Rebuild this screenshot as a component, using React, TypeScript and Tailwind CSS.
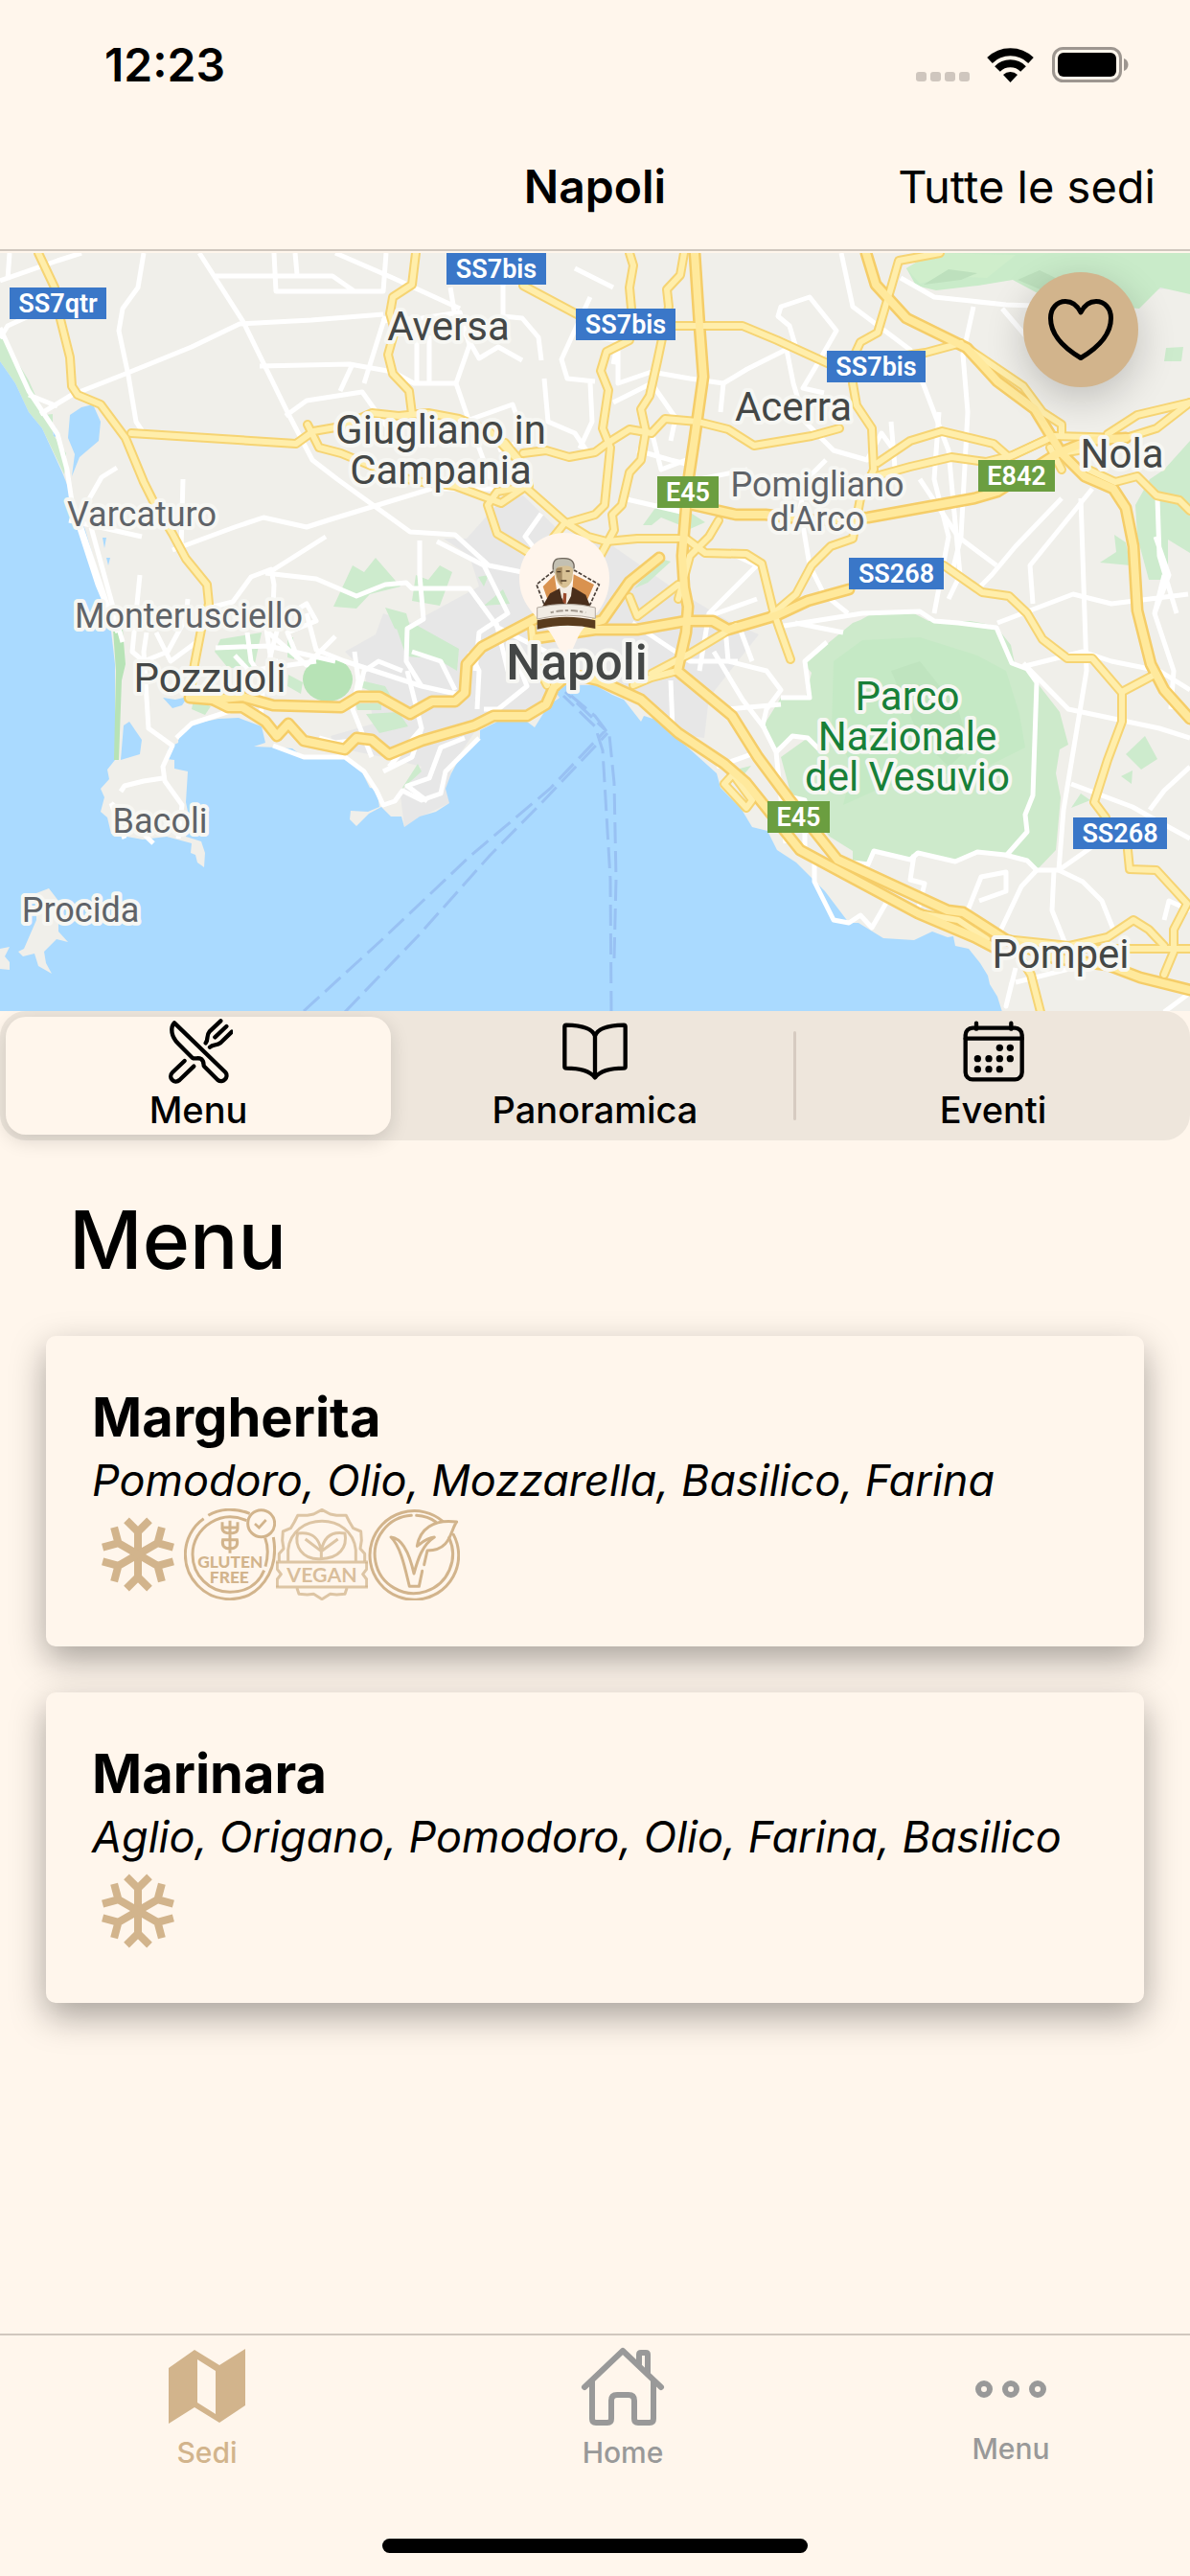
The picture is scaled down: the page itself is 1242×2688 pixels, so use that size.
import React, { useState } from 'react';

const greens = [
  'M0 348 30 397 46 433 55 432 55 453 69 473 67 495 44 447 30 430 16 400 0 377Z',
  'M368 590 380 597 392 582 418 612 386 620 372 635 348 633Z',
  'M434 600 447 605 459 590 472 597 459 632 430 627Z',
  'M230 667 273 660 265 697 238 697 224 680Z',
  'M382 745 416 743 426 758 396 765Z',
  'M412 650 436 653 479 677 477 700 455 687 424 685Z',
  'M436 797 440 805 418 825Z',
  'M300 665 306 665 307 688 300 686Z',
  'M301 704 316 712 314 724 300 716Z',
  'M372 709 402 716 410 730 374 716Z',
  'M371 734 398 734 398 741 373 741Z',
  'M202 730 220 737 214 746 200 740Z',
  'M402 634 424 640 430 660 412 656Z',
  'M505 632 525 615 532 630Z',
  'M499 602 510 600 505 612Z',
  'M671 548 684 530 716 532 736 545 720 552 690 540 680 548Z',
  'M662 614 690 583 700 586 676 608Z',
  'M1215 490 1242 460 1242 577 1219 563 1219 605 1199 605 1187 560 1185 527 1200 500Z',
  'M1163 558 1175 566 1180 590 1148 587 1165 576Z',
  'M1217 363 1235 362 1233 377 1215 377Z',
  'M1195 768 1208 792 1191 803 1175 787Z',
  'M1118 843 1128 828 1138 835Z',
  'M1170 810 1182 804 1181 818Z',
  'M768 803 784 799 775 810Z',
];

const lakes = [
  'M73 433 85 425 97 422 105 440 103 460 83 477 75 497 78 474 71 457Z',
  'M170 728 183 730 196 727 190 736 180 739Z',
  'M135 753 148 772 146 787 126 793 129 757Z',
  'M186 772 196 774 188 780Z',
  'M54 445 58 445 60 457 56 455Z',
  'M107 561 111 561 109 572Z',
  'M111 582 115 582 113 590Z',
];

const urban = [
  'M463 562 487 562 520 525 546 517 590 560 640 570 700 612 760 648 792 662 770 690 740 728 735 770 700 765 664 730 600 715 580 730 500 757 471 800 469 838 440 852 422 863 418 830 440 800 400 790 350 780 345 768 390 755 380 700 360 680 392 662 400 640 430 650 500 612 490 580Z',
  'M1192 290 1242 275 1242 300 1210 302Z',
];

// minor streets
const streets = [
  'M0 293 60 272 85 264',
  'M10 264 8 292',
  'M0 353 8 340 30 330M0 342 30 408 60 453 70 490 76 530 102 610 123 660',
  'M30 412 60 424M42 432 75 412 131 390 200 362 250 338 325 334 400 328',
  'M150 264 144 300 128 322 124 345 134 392 142 440 150 452',
  'M208 264 254 336 300 430 326 480 352 500 428 555 475 558 510 590 560 600',
  'M225 288 347 288 370 304M286 264 288 304 400 304 403 264',
  'M308 264 310 286M350 264 410 290 480 322',
  'M271 382 365 380 410 388 432 400 475 400M367 382 355 408',
  'M298 434 320 418 378 409 416 462M402 330 380 400',
  'M398 335 440 332 480 326 490 360 476 400 488 435 512 500',
  'M435 346 435 398M448 350 448 398M470 300 475 330 500 374 520 362 545 376M525 264 525 330 545 332 562 352 565 376',
  'M490 438 535 422 540 436 555 440 545 460 520 470',
  'M616 310 602 340 586 375 592 395 621 398',
  'M568 395 572 440 600 452 612 470M616 400 618 440 605 468',
  'M191 500 189 572M180 574 245 550 275 540 320 550 345 542 450 510 520 510',
  'M283 596 340 560M72 543 95 548 148 560M82 540 106 498 122 488',
  'M277 598 330 604 372 622 402 610 424 608 430 614 490 614 520 655 570 680',
  'M83 545 120 655M95 550 128 670M146 600 138 680 150 690 175 680 194 645 196 625',
  'M203 638 243 628 262 602 283 594 286 610 285 635 277 650 283 690 290 690M283 652 320 630 330 648 300 660 310 685',
  'M280 660 320 694 350 664M225 676 280 674 350 690M245 684 260 700 330 690',
  'M438 564 438 600 442 646 425 656 424 690 440 716M565 536 548 560 580 600',
  'M420 700 395 690 380 700 375 720M456 565 505 590 530 640 500 660 496 700',
  'M153 660 150 680 155 760 180 778 170 800 172 815 190 840 186 875M163 660 178 690 205 670',
  'M184 770 200 755 240 742M126 826 130 820 150 815 170 812M116 838 160 880M116 838 130 875',
  'M258 660 262 690 275 710 272 750M290 655 278 700M320 640 330 678 360 690 440 716 480 725',
  'M370 680 374 710 368 740 388 790M333 770 350 775 375 772',
  'M285 778 317 790 360 790 380 805 393 825 400 840 412 836 420 825 440 835 460 828 465 805 500 770',
  'M400 805 430 790 440 760 406 800M425 700 440 760M430 680 460 690 475 720M540 690 550 716 520 740 505 740',
  'M490 680 500 700 498 740M446 836 425 820 448 812 460 780 485 770M518 650 530 700 560 690',
  'M621 352 645 355 645 400 680 388 720 395 755 400 780 385 830 360 824 340 812 330 815 320 845 310 873 345 850 385 838 405 860 410M645 355 640 380',
  'M820 360 828 400 840 440 870 470 905 480 920 452 933 470M640 300 600 280M755 400 752 430',
  'M640 420 680 400 705 436 700 460M665 470 700 480 720 485M680 450 690 490 716 480M650 520 715 535 730 500 780 490',
  'M878 264 890 320 950 365 990 470 1002 600 990 625',
  'M940 290 975 310 1050 318 1108 320M1016 320 1005 370 1010 430 1003 560 993 600',
  'M1046 322 1070 350 1100 345M980 430 975 500 990 560 975 640',
  'M1108 520 1060 570 1035 600 1020 615M1140 510 1075 590 1078 630',
  'M1128 520 1134 700 1110 845 1105 908M960 500 1000 560 1040 590',
  'M862 480 842 500 835 530 845 590 860 620 885 640M930 440 935 500',
  'M1041 650 1120 620 1160 630 1240 620M1215 600 1205 640 1225 700 1222 740',
  'M758 575 790 590 760 620 740 640 730 700M720 650 790 625M830 650 880 660',
  'M812 654 900 640 960 638 975 648 1000 650 1040 655 1056 692 1072 698 1082 712 1078 830 1070 850 1072 868 1050 893',
  'M1206 560 1220 600 1205 640M1208 520 1210 580 1228 640',
  'M757 655 760 690 800 700 815 720 800 740 796 757 810 785 820 880M660 650 720 690 770 690M707 700 760 740 815 735',
  'M700 710 702 760 733 785M745 680 775 730 798 760M770 650 785 690M748 800 790 785',
  'M863 670 840 690 845 728 815 728',
  'M810 785 827 768 843 770 855 782M818 830 840 835 840 890M850 900 850 920 870 960 886 963 898 955 910 968 925 942',
  'M890 900 906 902 912 888 950 897 958 890 997 899 1020 889 1049 892 1072 898 1082 908 1105 908 1145 880',
  'M954 892 950 918 965 922 958 950M1082 908 1066 925 1040 980M1100 908 1098 950 1112 985M1105 908 1130 920 1150 940 1162 970',
  'M1010 950 1024 915 1050 910 1050 930 1022 940M1068 692 1115 740 1210 760 1242 770',
  'M1070 695 1130 680 1160 690 1210 700 1242 720M1118 818 1150 830 1182 842 1205 855 1242 875',
  'M1200 845 1215 825 1242 800M1056 1025 1050 1050 1060 1010M1060 1025 1120 1010 1156 1007M1242 950 1220 940 1215 960M1215 1056 1242 1036',
];

// main roads, drawn as a dark casing and a lighter core
const roads = [
  'M40 264 57 300 63 333 73 373 75 403 81 412 105 422 131 457 150 503 162 527 180 557 194 583 216 610 218 630 210 657 203 693 198 728',
  'M137 452 309 463 327 450 356 445 388 431 416 434 447 431 479 437 511 450 530 470 546 485',
  'M434 264 430 297 410 310 407 327 412 345 405 370 410 390 427 408 430 432',
  'M321 443 333 467 356 473 392 488 432 502 475 507 523 525 548 508 590 545 578 560 570 577',
  'M546 508 519 513 509 527 519 557 554 578 570 578',
  'M527 462 546 485 552 507',
  'M546 473 570 470 594 477 621 472 633 463 657 448 680 452 694 437 728 440 760 448 787 465 847 455 876 447',
  'M546 298 606 330 640 340 705 340 775 340 811 355 870 382 966 368 1003 358',
  'M714 264 710 287 696 302 698 320 686 377 678 413 669 427 674 450 669 480 657 493 649 527 639 537 641 553 621 590',
  'M657 264 661 277 657 300 659 322 657 355 633 367 627 387 635 407 629 447 637 467 631 527 621 537 594 545',
  'M1009 363 1068 403 1088 430 1108 443 1108 453',
  'M981 264 938 272 930 300 916 347 898 357 892 370 890 400 894 423 910 447 912 490 898 520 890 562 867 570 847 590 831 620 805 642',
  'M916 483 950 460 983 450 1037 463 1053 477 1100 455',
  'M914 497 950 487 993 477 1029 482 1057 475 1100 455 1175 457 1207 447 1242 420',
  'M1156 453 1187 433 1242 420',
  'M590 545 614 560 633 565 665 562 716 562 736 577 779 578 795 588 807 637 815 660 825 688',
  'M750 543 740 560 720 580 708 625',
  'M657 623 665 643 708 610',
  'M985 590 1025 618 1053 622 1072 640 1088 667 1114 687 1140 687 1171 723 1171 753 1156 793 1142 837 1154 853',
  'M1177 887 1179 907 1207 908 1239 943 1225 970 1225 993 1215 1017',
  'M1171 722 1203 705',
  'M1136 490 1164 503 1187 497 1207 517 1231 522 1242 533',
  'M1096 467 1108 490M1108 473 1136 468',
  'M680 703 720 682 768 653',
  'M661 715 680 707 707 700',
  'M958 953 1000 960 1030 980',
  'M756 818 765 808 785 835 779 843 756 818',
  'M1057 987 1076 1017 1086 1056',
  'M1049 980 1116 987 1156 978 1183 960 1199 970 1215 987',
  'M1130 990 1242 990',
  'M555 655 558 690 571 715',
];

const motorways = [
  'M725 264 730 340 734 393 725 457 719 497 716 530 712 580 714 613 718 633 716 660 707 700 764 747 791 790 823 833 874 897 989 950 1005 952 1049 980 1100 1000 1156 1007 1190 1020 1242 1033',
  'M904 264 914 297 946 332 1009 363 1041 398 1080 427 1108 473 1132 497 1162 510 1175 530 1183 570 1187 637 1201 693 1215 720 1242 750',
  'M724 527 768 537 799 537 850 543 906 540 1017 520 1041 513 1104 473 1136 460 1175 457',
  'M688 582 657 607 629 647 600 655',
  'M560 666 621 657 665 657 716 648 744 648 760 657 811 642 843 627 886 615',
  'M198 728 222 730 253 727 285 736 356 738 374 727 396 727 428 745 451 732 475 732 485 723 487 693 503 675 560 645',
  'M218 728 238 738 253 738 277 753 289 768 301 755 317 773 360 782 372 770 388 772 406 787 440 773 495 757 515 747 550 747 570 735 578 717 594 703 625 710 669 730 708 765 756 797 779 817 819 867 835 887 958 953 1017 978 1040 990',
];

type Place = { lines: [string, number][]; x: number; kind: 'town' | 'village' | 'park' };

const places: Place[] = [
  { lines: [['Aversa', 355]], x: 468, kind: 'town' },
  { lines: [['Giugliano in', 463], ['Campania', 505]], x: 460, kind: 'town' },
  { lines: [['Acerra', 439]], x: 828, kind: 'town' },
  { lines: [['Nola', 488]], x: 1171, kind: 'town' },
  { lines: [['Pozzuoli', 722]], x: 219, kind: 'town' },
  { lines: [['Pompei', 1010]], x: 1107, kind: 'town' },
  { lines: [['Varcaturo', 549]], x: 148, kind: 'village' },
  { lines: [['Monterusciello', 655]], x: 197, kind: 'village' },
  { lines: [['Pomigliano', 518], ["d'Arco", 554]], x: 853, kind: 'village' },
  { lines: [['Bacoli', 869]], x: 167, kind: 'village' },
  { lines: [['Procida', 962]], x: 84, kind: 'village' },
  { lines: [['Parco', 741], ['Nazionale', 783], ['del Vesuvio', 825]], x: 947, kind: 'park' },
];

const placeStyles = {
  town: 'fill-[#444746] text-[42px]',
  village: 'fill-[#5f6368] text-[36px]',
  park: 'fill-[#188038] text-[42px]',
};

const shields = [
  { label: 'SS7qtr', x: 10, y: 300, w: 101, color: '#3a77c8' },
  { label: 'SS7bis', x: 466, y: 264, w: 104, color: '#3a77c8' },
  { label: 'SS7bis', x: 601, y: 322, w: 104, color: '#3a77c8' },
  { label: 'SS7bis', x: 863, y: 366, w: 103, color: '#3a77c8' },
  { label: 'E45', x: 686, y: 497, w: 64, color: '#6b9e40' },
  { label: 'E842', x: 1021, y: 480, w: 80, color: '#6b9e40' },
  { label: 'SS268', x: 886, y: 582, w: 99, color: '#3a77c8' },
  { label: 'E45', x: 801, y: 836, w: 65, color: '#6b9e40' },
  { label: 'SS268', x: 1120, y: 853, w: 98, color: '#3a77c8' },
];

function NapoliMap() {
  return (
    <svg viewBox="0 264 1242 791" className="block w-full font-['Roboto',sans-serif]" role="img" aria-label="Mappa di Napoli">
      <rect y="264" width="1242" height="792" fill="#f0efea" />
      {urban.map((d) => <path key={d} d={d} fill="#e7e7e7" />)}
      {greens.map((d) => <path key={d} d={d} fill="#cdebcd" />)}

      {/* Vesuvio park */}
      <path d="M914 638 898 647 890 650 862 673 839 693 847 702 841 728 815 728 797 757 807 783 827 768 843 770 815 790 825 827 866 873 890 888 890 900 906 902 912 888 950 897 954 892 997 899 1017 889 1049 892 1072 898 1082 908 1102 887 1107 832 1102 807 1106 782 1115 777 1106 743 1082 712 1070 695 1059 692 1055 673 1039 653 1013 648 969 648 950 638Z" fill="#cdeacb" />
      <path d="M870 690 900 668 960 665 1020 684 1050 700 1064 745 1070 780 1030 800 960 812 920 822 880 840 890 800 868 760Z" fill="#c5e9c5" />
      <path d="M930 700 960 690 1000 740 1012 780 990 800 960 770Z" fill="#bfe4bf" />

      {/* hills above Nola */}
      <path d="M973 264 946 280 956 298 977 303 1021 298 1057 292 1096 313 1189 322 1211 300 1242 307 1242 264Z" fill="#c9ebc9" />
      <path d="M973 264 1060 266 1030 290 990 288 960 296 946 280Z" fill="#cfeecb" />
      <path d="M964 297 990 281 1020 285 1003 292Z" fill="#bde0bd" />
      <path d="M1062 292 1085 282 1110 294 1095 306Z" fill="#bde0bd" />

      {/* sea and islands */}
      <path d="M0 377 16 400 30 430 44 447 65 493 77 523 89 553 99 587 113 633 117 667 120 693 120 793 112 803 114 813 105 823 109 832 105 847 112 853 116 870 149 876 174 873 200 880 199 890 204 892 206 900 213 905 214 890 210 878 194 873 198 857 194 837 196 805 182 802 182 793 174 792 176 780 186 775 188 765 204 755 228 750 249 749 273 758 277 775 265 779 289 780 305 781 317 790 348 788 360 792 376 802 386 822 393 823 396 842 384 847 366 846 365 855 372 862 385 849 398 842 408 852 419 852 422 863 438 852 455 847 469 838 465 823 471 807 483 785 501 770 501 762 519 753 550 753 558 759 568 743 574 735 584 728 580 722 590 715 621 715 639 725 651 730 669 753 672 747 688 752 706 770 718 780 748 807 752 822 773 843 785 863 801 867 811 887 831 900 861 930 886 963 896 963 922 979 954 981 973 972 989 978 995 977 997 987 1011 990 1023 1005 1031 1018 1033 1027 1041 1040 1046 1056 0 1056Z" fill="#aadaff" />
      <path d="M38 932 51 927 61 940 61 972 71 983 59 980 46 993 48 1005 54 1016 40 1008 36 995 24 998 19 993 25 990 38 960Z" fill="#f0efea" />
      <path d="M0 990 10 988 5 998 10 1004 10 1012 0 1011Z" fill="#f0efea" />
      {lakes.map((d) => <path key={d} d={d} fill="#aadaff" />)}
      <path d="M118 657 128 657 131 693 127 710 124 793 119 793 121 700Z" fill="#b7e3b6" />
      <ellipse cx="342" cy="709" rx="26" ry="23" fill="#b7e3b6" />

      {/* ferry lines */}
      <g fill="none" stroke="#98c1f3" strokeWidth="3" strokeDasharray="22 8">
        <path d="M317 1055 396 983 491 893 574 823 632 762 590 722" />
        <path d="M360 1056 436 977 511 893 566 837 634 765" />
        <path d="M638 1056 637 917 629 783 621 758 588 726" />
        <path d="M641 1000 643 917 641 817 636 767 621 747 596 726" />
      </g>

      <g fill="none" stroke="#ffffff" strokeWidth="5" strokeLinejoin="round">
        {streets.map((d) => <path key={d} d={d} />)}
      </g>
      <g fill="none" strokeLinejoin="round" strokeLinecap="round">
        <g stroke="#f6d473" strokeWidth="10">{roads.map((d) => <path key={d} d={d} />)}</g>
        <g stroke="#f5cd68" strokeWidth="13">{motorways.map((d) => <path key={d} d={d} />)}</g>
        <g stroke="#ffeeab" strokeWidth="6">{roads.map((d) => <path key={d} d={d} />)}</g>
        <g stroke="#ffe99c" strokeWidth="8">{motorways.map((d) => <path key={d} d={d} />)}</g>
      </g>

      {places.map((place) => (
        <text key={place.x} textAnchor="middle" stroke="#f7f7f3" strokeWidth="8" strokeLinejoin="round" paintOrder="stroke" className={placeStyles[place.kind]}>
          {place.lines.map(([line, y]) => <tspan key={line} x={place.x} y={y}>{line}</tspan>)}
        </text>
      ))}

      {shields.map((s) => (
        <g key={`${s.label}-${s.x}`}>
          <rect x={s.x} y={s.y} width={s.w} height="33" fill={s.color} />
          <text x={s.x + s.w / 2} y={s.y + 26} textAnchor="middle" className="fill-white text-[27px] font-semibold">{s.label}</text>
        </g>
      ))}

      <path d="M589 556a47 47 0 0 1 47 47c0 26-14 38-28 54-8 10-10 27-17 27s-10-17-20-28c-14-16-29-27-29-53a47 47 0 0 1 47-47Z" fill="#fff5ec" />
      <text x="602" y="709" textAnchor="middle" stroke="#f7f7f3" strokeWidth="8" strokeLinejoin="round" paintOrder="stroke" className="fill-[#444746] text-[51px] font-medium">Napoli</text>
      <PinPortrait />
    </svg>
  );
}

function PinPortrait() {
  return (
    <g transform="translate(500 560) scale(0.3333)">
      <path d="M232 108 180 150 204 212 348 212 376 150 300 106Z" fill="#fff5ec" stroke="#4b4039" strokeWidth="5" strokeDasharray="12 5" />
      <path d="M236 120 200 156 214 196 245 180ZM296 118 360 150 338 200 292 170Z" fill="#d9924f" />
      <path d="M196 222 222 178 256 160 294 158 334 182 350 222Z" fill="#4a2e1b" />
      <path d="M252 160 292 152 288 186 272 216 258 190Z" fill="#f3ece2" />
      <path d="M264 176 274 178 272 214 262 204Z" fill="#9a4a2c" />
      <path d="M236 92C238 72 296 68 296 96L292 132C288 152 270 166 260 158 246 150 236 130 236 92Z" fill="#d8c194" />
      <path d="M240 98 260 96 260 150C248 144 240 126 240 98Z" fill="#a58b62" />
      <path d="M233 112C226 62 250 66 266 66 290 66 300 78 296 108 290 88 276 92 262 92 246 92 240 96 238 116Z" fill="#c3c0b2" />
      <path d="M232 104C228 64 250 68 266 68 290 68 300 80 297 100" fill="none" stroke="#6f675d" strokeWidth="4" />
      <path d="M244 110h12M272 108h12M256 138h18" stroke="#4c3a26" strokeWidth="4" />
      <path d="M182 222Q275 200 364 222L364 256Q275 236 182 258Z" fill="#f1ebe3" stroke="#b3a99e" strokeWidth="3" />
      <path d="M224 238Q275 224 334 238" fill="none" stroke="#a39a90" strokeWidth="6" strokeDasharray="10 8 22 6" />
      <path d="M182 262Q275 240 364 262L364 288Q275 268 182 290Z" fill="#5a3c1d" />
    </g>
  );
}

function StatusIcons() {
  return (
    <svg width="222" height="40" viewBox="0 0 222 40" aria-hidden="true">
      <g fill="#cfc6be">
        <rect x="0" y="27" width="11" height="10" rx="3" />
        <rect x="15" y="27" width="11" height="10" rx="3" />
        <rect x="30" y="27" width="11" height="10" rx="3" />
        <rect x="45" y="27" width="11" height="10" rx="3" />
      </g>
      <g fill="none" stroke="#000" strokeWidth="8">
        <path d="M77 15a31 31 0 0 1 43 0" />
        <path d="M85 24a19 19 0 0 1 27 0" />
      </g>
      <path d="M98.500 38 91 30a11 11 0 0 1 15 0Z" />
      <rect x="143.500" y="2.500" width="70" height="34" rx="10" fill="none" stroke="#9d9690" strokeWidth="3" />
      <rect x="148" y="7" width="61" height="25" rx="6" />
      <path d="M217 13c6 2 6 11 0 13Z" fill="#9d9690" />
    </svg>
  );
}

function CutleryIcon() {
  return (
    <svg viewBox="33 36 216 216" className="size-18" fill="none" stroke="currentColor" strokeWidth="13" strokeLinecap="round" strokeLinejoin="round" aria-hidden="true">
      <path d="M66 55 226 210C238 224 218 246 202 234L160 192C154 186 162 178 150 168 140 162 130 170 122 164L78 120C56 98 52 70 66 55Z" />
      <path d="M98 174 60 210C44 226 66 248 82 234L127 191" />
      <path d="M211 49 176 82C164 96 174 106 164 118M229 66 193 100M246 83 211 117C198 128 188 120 177 131" />
    </svg>
  );
}

function BookIcon() {
  return (
    <svg viewBox="1284 36 216 216" className="size-18" fill="none" stroke="currentColor" strokeWidth="13" strokeLinejoin="round" aria-hidden="true">
      <path d="M1392 96C1384 72 1350 63 1302 62Q1297 62 1297 67V192Q1297 197 1302 197C1342 197 1376 206 1392 226 1408 206 1442 197 1482 197Q1487 197 1487 192V67Q1487 62 1482 62C1434 63 1400 72 1392 96ZM1392 90V226" />
    </svg>
  );
}

function CalendarIcon() {
  const days = [[127, 97], [160, 97], [58, 131], [93, 131], [127, 131], [160, 131], [58, 164], [93, 164], [127, 164]];
  return (
    <svg viewBox="0 0 216 216" className="size-18" fill="none" stroke="currentColor" strokeWidth="13" strokeLinecap="round" aria-hidden="true">
      <rect x="20" y="35" width="177" height="161" rx="22" />
      <path d="M20 68H197M54 20V38M163 20V38" />
      {days.map(([x, y]) => <circle key={`${x}-${y}`} cx={x} cy={y} r="11" fill="currentColor" stroke="none" />)}
    </svg>
  );
}

function SnowflakeIcon() {
  return (
    <svg viewBox="0 0 288 288" className="size-24" role="img" aria-label="Surgelato" fill="none" stroke="currentColor" strokeWidth="24">
      {[0, 60, 120, 180, 240, 300].map((angle) => (
        <path key={angle} transform={`rotate(${angle} 144 144)`} d="M144 144V60M108 37 144 73 180 37" />
      ))}
    </svg>
  );
}

function GlutenFreeIcon() {
  return (
    <svg viewBox="0 0 288 288" className="size-24" role="img" aria-label="Senza glutine" fill="none" stroke="currentColor" strokeWidth="9">
      <path d="M76 22C112 0 160 -2 206 16M280 90C300 200 232 284 144 284 60 284 4 216 4 144 4 100 26 56 62 32" />
      <path d="M84 44C120 22 160 22 196 38M254 92C266 124 264 150 255 182M251 194C232 240 192 262 144 262 80 262 27 210 27 144 27 104 48 66 84 44" />
      <circle cx="242" cy="47" r="42" />
      <path d="m222 48 13 12 22-24" strokeWidth="8" />
      <path d="M144 38V140M120 43V64Q122 78 144 78 168 78 168 64V43M120 60H168M122 98H166Q172 126 144 126 116 126 122 98Z" />
      <g fill="currentColor" stroke="none" textAnchor="middle" className="font-['Lato',sans-serif] text-[52px] font-black">
        <text x="145" y="185">GLUTEN</text>
        <text x="142" y="233">FREE</text>
      </g>
    </svg>
  );
}

function VeganIcon() {
  return (
    <svg viewBox="0 0 288 288" className="size-24" role="img" aria-label="Vegano" fill="none" stroke="currentColor" strokeOpacity="0.75" strokeWidth="9" strokeLinejoin="round">
      <path d="M10 166V142L24 126 20 100 22 72 46 62 58 42 68 22 98 22 118 18 144 4 170 18 190 22 220 22 230 42 242 62 266 72 268 100 264 126 278 142V166" />
      <path d="M38 166V130C50 10 238 10 250 130V166M0 168H288M0 246H288M66 250 72 268 98 270 118 268 144 284 170 268 190 270 216 268 222 250" />
      <path d="M4 168V190L16 206 4 222V246M284 168V190L272 206 284 222V246" />
      <path d="M138 158C80 160 58 116 68 78 112 72 134 90 142 132 150 90 172 70 216 78 224 120 200 158 138 158M92 96 142 134V158M142 134 194 96" />
      <text x="144" y="230" textAnchor="middle" stroke="none" fill="currentColor" fillOpacity="0.85" className="font-['Lato',sans-serif] text-[64px] font-bold">VEGAN</text>
    </svg>
  );
}

function VegetarianIcon() {
  return (
    <svg viewBox="0 0 288 288" className="size-24" role="img" aria-label="Vegetariano" fill="none" stroke="currentColor" strokeWidth="9" strokeLinecap="round" strokeLinejoin="round">
      <path d="M234 40A139 139 0 1 0 268 82" />
      <path d="M136 22A122 122 0 1 0 254 92M152 22C178 24 196 30 212 42" />
      <path d="M170 196 160 244H130C118 196 104 120 72 90 112 94 132 150 144 204 156 160 170 114 208 90 184 92 170 106 154 118 162 66 204 32 278 42 258 66 262 132 186 132L176 176" />
    </svg>
  );
}

const diets = {
  frozen: SnowflakeIcon,
  glutenFree: GlutenFreeIcon,
  vegan: VeganIcon,
  vegetarian: VegetarianIcon,
};

type Dish = { name: string; ingredients: string; tags: (keyof typeof diets)[] };

const dishes: Dish[] = [
  { name: 'Margherita', ingredients: 'Pomodoro, Olio, Mozzarella, Basilico, Farina', tags: ['frozen', 'glutenFree', 'vegan', 'vegetarian'] },
  { name: 'Marinara', ingredients: 'Aglio, Origano, Pomodoro, Olio, Farina, Basilico', tags: ['frozen'] },
];

const tabs = [
  { id: 'menu', label: 'Menu', Icon: CutleryIcon },
  { id: 'panoramica', label: 'Panoramica', Icon: BookIcon },
  { id: 'eventi', label: 'Eventi', Icon: CalendarIcon },
];

function BottomNav() {
  return (
    <nav className="grid h-[253px] grid-cols-[432fr_436fr_374fr] items-start border-t-2 border-[#d0c7be] pt-3 text-[30px] leading-9 font-medium text-[#999999]">
      <a href="#sedi" className="flex flex-col items-center gap-2 text-[#d2b48c]">
        <svg viewBox="0 0 84 84" className="size-21" fill="currentColor" aria-hidden="true">
          <path fillRule="evenodd" d="M2 22 29 3 55 19 82 2V61L55 79 29 63 2 80ZM32 13V58L51 70V25Z" />
        </svg>
        Sedi
      </a>
      <a href="#home" className="flex flex-col items-center gap-2">
        <svg viewBox="0 0 88 84" className="h-21 w-22" fill="none" stroke="currentColor" strokeWidth="6" strokeLinecap="round" strokeLinejoin="round" aria-hidden="true">
          <path d="M4 42 44 4 84 42M12 36V75Q12 79 16 79H28Q32 79 32 75V56Q32 50 38 50H50Q56 50 56 56V75Q56 79 60 79H72Q76 79 76 75V36M61 18V8Q61 6 63 6H68Q70 6 70 8V27" />
        </svg>
        Home
      </a>
      <a href="#altro" className="flex flex-col items-center gap-1">
        <svg viewBox="0 0 84 84" className="size-21" fill="none" stroke="currentColor" strokeWidth="6" aria-hidden="true">
          <circle cx="14" cy="44" r="6" />
          <circle cx="42" cy="44" r="6" />
          <circle cx="70" cy="44" r="6" />
        </svg>
        Menu
      </a>
    </nav>
  );
}

export default function App() {
  const [tab, setTab] = useState('menu');
  const [liked, setLiked] = useState(false);

  return (
    <div className="flex min-h-screen flex-col bg-[#fff6ec] font-['Inter','Liberation_Sans',sans-serif] text-black">
      <div className="flex h-[130px] items-center justify-between pt-1.5 pr-16 pl-[109px]">
        <span className="text-[48px] font-semibold">12:23</span>
        <StatusIcons />
      </div>

      <header className="mb-0.5 grid h-[132px] grid-cols-3 items-center border-b-2 border-[#d0c7be] px-9 text-[47px]">
        <span />
        <h1 className="text-center text-[48px] font-semibold">Napoli</h1>
        <a href="#tutte" className="justify-self-end whitespace-nowrap">Tutte le sedi</a>
      </header>

      <div className="relative">
        <NapoliMap />
        <button
          type="button"
          aria-label="Preferito"
          aria-pressed={liked}
          onClick={() => setLiked((v) => !v)}
          className="absolute top-5 right-[54px] flex size-[120px] items-center justify-center rounded-full bg-[#d2b48c] shadow-[0_12px_40px_rgba(0,0,0,0.2)]"
        >
          <svg viewBox="0 0 68 64" className="h-16 w-17" fill={liked ? 'currentColor' : 'none'} stroke="currentColor" strokeWidth="5" strokeLinejoin="round" aria-hidden="true">
            <path d="M34 14C30 6 24 2.500 18 2.500 9 2.500 2.500 10 2.500 20 2.500 38 18 52 34 61.500 50 52 65.500 38 65.500 20 65.500 10 59 2.500 50 2.500 44 2.500 38 6 34 14Z" />
          </svg>
        </button>
      </div>

      <div role="tablist" className="grid grid-cols-3 rounded-[27px] bg-[#eee6dc] py-1.5">
        {tabs.map(({ id, label, Icon }) => (
          <div key={id} className="group flex items-center">
            <span className="hidden h-[93px] w-[3px] rounded-full bg-[#d6cbc1] group-last:block" />
            <button
              type="button"
              role="tab"
              aria-selected={tab === id}
              onClick={() => setTab(id)}
              className={`mx-1.5 flex grow flex-col items-center rounded-[21px] text-[38px] leading-[51px] font-medium ${tab === id ? 'bg-[#fff6ec] shadow-[0_6px_20px_rgba(0,0,0,0.14)]' : ''}`}
            >
              <Icon />
              {label}
            </button>
          </div>
        ))}
      </div>

      <main className="flex grow flex-col px-12">
        <h2 className="px-6 pt-12 pb-11 text-[84px] leading-28 font-medium">Menu</h2>
        <div className="flex flex-col gap-12">
          {dishes.map((dish) => (
            <article key={dish.name} className="rounded-[10px] bg-[#fff6ec] p-12 shadow-[0_14px_36px_rgba(0,0,0,0.34)]">
              <h3 className="text-[56px] leading-[74px] font-bold">{dish.name}</h3>
              <p className="text-[45px] leading-[58px] italic">{dish.ingredients}</p>
              <div className="flex text-[#d2b48c]">
                {dish.tags.map((tag) => {
                  const Icon = diets[tag];
                  return <Icon key={tag} />;
                })}
              </div>
            </article>
          ))}
        </div>
      </main>

      <BottomNav />
      {/* home indicator */}
      <div className="fixed bottom-6 left-1/2 h-[15px] w-[444px] -translate-x-1/2 rounded-full bg-black" />
    </div>
  );
}
